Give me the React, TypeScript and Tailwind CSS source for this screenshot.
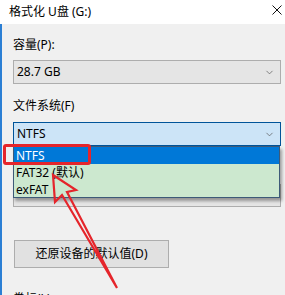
import { ChevronDown } from 'lucide-react';

const font = { fontFamily: '"Noto Sans", "Noto Sans CJK SC", sans-serif' };

function Combo({ value, focused, h }: { value: string; focused?: boolean; h: string }) {
  return (
    <div
      className={`${h} w-[268px] flex items-center justify-between pl-[3px] pr-[5px] border ${
        focused ? 'bg-[#cce4f7] border-[#005499]' : 'bg-[#e5e5e5] border-[#adadad]'
      }`}
    >
      <span className="text-[12px] text-black leading-none">{value}</span>
      <ChevronDown className="w-[11px] h-[11px] text-[#555]" strokeWidth={1.5} />
    </div>
  );
}

export default function App() {
  const options = ['NTFS', 'FAT32 (默认)', 'exFAT'];

  return (
    <div className="relative w-[285px] h-[295px] overflow-hidden bg-[#f0f0f0]" style={font}>
      {/* Title bar */}
      <div className="h-[24px] bg-white flex items-center justify-between pl-[9px] pr-[3px]">
        <span className="text-[12px] text-black">格式化 U盘 (G:)</span>
        <svg width="10" height="10" viewBox="0 0 10 10" className="mb-[4px]">
          <path d="M0.5 0.5L9.5 9.5M9.5 0.5L0.5 9.5" stroke="#111" strokeWidth="1" />
        </svg>
      </div>

      {/* Body */}
      <div className="border-l-2 border-[#2b7fd4] h-[271px] pl-[11px] pt-[13px]">
        <div className="text-[12px] leading-[16px] text-black">容量(P):</div>
        <div className="mt-[7px]">
          <Combo value="28.7 GB" h="h-[24px]" />
        </div>
        <div className="mt-[14px] text-[12px] leading-[16px] text-black">文件系统(F)</div>
        <div className="mt-[8px]">
          <Combo value="NTFS" focused h="h-[24px]" />
        </div>
        {/* allocation unit label, hidden under the open list */}
        <div className="mt-[8px] h-[16px]" />
        <div className="mt-[14px]">
          <Combo value="" h="h-[23px]" />
        </div>
        <button className="mt-[33px] ml-px w-[155px] h-[28px] bg-[#e1e1e1] border border-[#adadad] text-[12px] text-black flex items-center justify-center">
          还原设备的默认值(D)
        </button>
        <div className="mt-[23px] text-[12px] leading-[16px] text-black">卷标(L)</div>
      </div>

      {/* Open dropdown list */}
      <div className="absolute left-[13px] top-[146px] w-[267px] h-[52px] bg-[#cce8cf] border border-[#3d5a78] shadow-[2px_3px_3px_rgba(0,0,0,0.35)]">
        {options.map((o, i) => (
          <div
            key={o}
            className={`h-[17px] flex items-center pl-[2px] text-[12px] ${
              i === 0 ? 'bg-[#0078d7] text-white' : 'text-black'
            }`}
          >
            {o}
          </div>
        ))}
      </div>

      {/* Red highlight around NTFS */}
      <div className="absolute left-[3px] top-[144px] w-[88px] h-[21px] border-[3px] border-[#e5252b] rounded-[3px]" />

      {/* Red arrow */}
      <svg className="absolute left-0 top-0" width="285" height="295" viewBox="0 0 285 295">
        <path
          d="M53 175 L76 190 L67 192 L117 288 L62 195 L55 202 Z"
          fill="none"
          stroke="#e5252b"
          strokeWidth="2.2"
          strokeLinejoin="miter"
        />
      </svg>
    </div>
  );
}
